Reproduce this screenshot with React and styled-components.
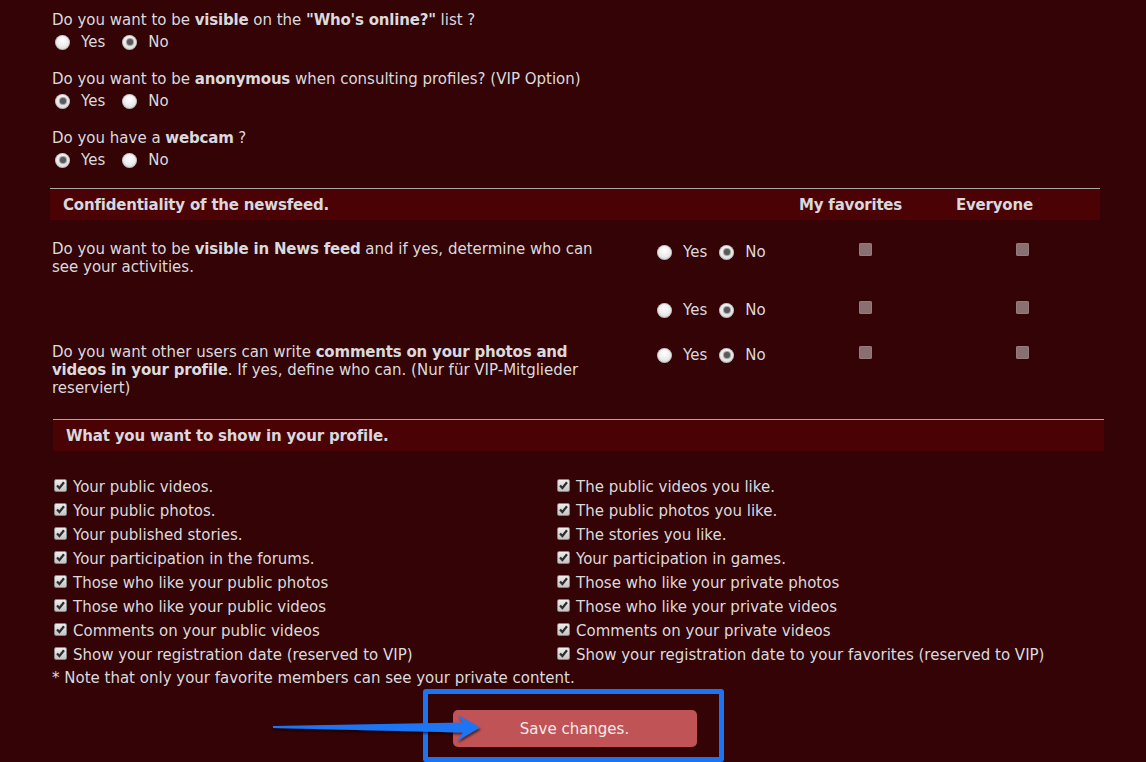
import React from 'react';
import styled, { createGlobalStyle } from 'styled-components';

const GlobalStyle = createGlobalStyle`
  body {
    margin: 0;
    background: #330305;
    color: #dadade;
    font-family: "DejaVu Sans", Verdana, sans-serif;
    font-size: 15px;
    line-height: 18px;
  }
  b {
    letter-spacing: -0.2px;
  }
`;

const Page = styled.div`
  width: 1050px;
  margin-left: 50px;
  padding-top: 11px;
`;

const Question = styled.div`
  padding-left: 2px;
  & + & {
    margin-top: 17px;
  }
`;

const QuestionText = styled.div`
  height: 18px;
`;

const Options = styled.div`
  display: flex;
  align-items: center;
  height: 22px;
  margin-top: ${(p) => p.$top ?? 2}px;
  padding-left: ${(p) => p.$indent ?? 3}px;
`;

const Option = styled.label`
  display: flex;
  align-items: center;
  gap: 11px;
  margin-right: ${(p) => p.$gap}px;
`;

const RadioDot = styled.span`
  width: 15px;
  height: 15px;
  border-radius: 50%;
  flex: none;
  background: radial-gradient(circle at 50% 35%, #ffffff 0%, #ececec 50%, #c6c6c6 100%);
  box-shadow: inset 0 0 0 1px rgba(0, 0, 0, 0.15);
  display: inline-flex;
  align-items: center;
  justify-content: center;

  &::after {
    content: '';
    display: ${(p) => (p.$on ? 'block' : 'none')};
    width: 6px;
    height: 6px;
    border-radius: 50%;
    background: #5a5a5a;
    box-shadow: 0 0 1px 1px #9a9a9a;
  }
`;

const Section = styled.section`
  border-top: 1px solid #a9a9a9;
  margin-top: ${(p) => p.$top}px;
  margin-left: ${(p) => p.$shift || 0}px;
  width: ${(p) => p.$width}px;
`;

const SectionHead = styled.div`
  display: grid;
  grid-template-columns: ${(p) => p.$cols || '1fr'};
  align-items: center;
  height: 31px;
  background: #4a0204;
  font-weight: bold;
  color: #d8d8de;
  letter-spacing: -0.2px;
`;

const HeadCell = styled.div`
  padding-left: ${(p) => p.$pad ?? 12}px;
  grid-column: ${(p) => p.$span || 'auto'};
`;

const FEED_COLS = '600px 137px 157px 156px';

const FeedBody = styled.div`
  padding-top: 20px;
`;

const FeedRow = styled.div`
  display: grid;
  grid-template-columns: ${FEED_COLS};
  align-items: start;
  min-height: 23px;
  padding-bottom: 22px;
`;

const FeedText = styled.div`
  padding: 0 36px 0 2px;
`;

const FeedRadios = styled.div`
  padding-left: 7px;
`;

const BoxCell = styled.div`
  display: flex;
  justify-content: center;
  padding-top: 3px;
`;

const DisabledBox = styled.span`
  width: 13px;
  height: 13px;
  border-radius: 2px;
  background: #8a6f71;
  box-shadow: inset 0 0 0 1px #957b7d;
`;

const ShowList = styled.div`
  display: grid;
  grid-template-columns: 503px 1fr;
  padding: 24px 0 0 1px;
`;

const ShowColumn = styled.div`
  display: flex;
  flex-direction: column;
`;

const ShowItem = styled.label`
  display: flex;
  align-items: center;
  gap: 6px;
  height: 24px;
`;

const CheckBox = styled.span`
  width: 13px;
  height: 13px;
  flex: none;
  box-sizing: border-box;
  border: 1px solid #858585;
  border-radius: 2px;
  background: linear-gradient(#eeeeee, #c4c4c4);
  display: flex;
  align-items: center;
  justify-content: center;
  margin-top: -4px;
`;

const Note = styled.div`
  padding-left: 2px;
  line-height: 22px;
`;

const SaveArea = styled.div`
  position: relative;
  display: flex;
  justify-content: center;
`;

const Frame = styled.div`
  border: 5px solid #1b74f4;
  border-radius: 3px;
  padding: 16px 22px 10px 25px;
  margin-right: 4px;
`;

const SaveButton = styled.button`
  width: 244px;
  height: 37px;
  border: none;
  border-radius: 5px;
  background: #c05356;
  color: #f6eaea;
  font-family: "DejaVu Sans", Verdana, sans-serif;
  font-size: 15px;
`;

const Arrow = styled.svg`
  position: absolute;
  left: 223px;
  top: 22px;
  overflow: visible;
`;

const Radio = ({ on, label, gap = 12 }) => (
  <Option $gap={gap}>
    <RadioDot $on={on} />
    {label}
  </Option>
);

const YesNo = ({ yes, gap, indent, top }) => (
  <Options $indent={indent} $top={top}>
    <Radio on={yes} label="Yes" gap={gap} />
    <Radio on={!yes} label="No" gap={0} />
  </Options>
);

const Tick = () => (
  <svg width="9" height="9" viewBox="0 0 9 9">
    <path d="M1 4.4 L3.4 7 L8 1.2" fill="none" stroke="#2e2e2e" strokeWidth="2.2" />
  </svg>
);

const leftItems = [
  'Your public videos.',
  'Your public photos.',
  'Your published stories.',
  'Your participation in the forums.',
  'Those who like your public photos',
  'Those who like your public videos',
  'Comments on your public videos',
  'Show your registration date (reserved to VIP)',
];

const rightItems = [
  'The public videos you like.',
  'The public photos you like.',
  'The stories you like.',
  'Your participation in games.',
  'Those who like your private photos',
  'Those who like your private videos',
  'Comments on your private videos',
  'Show your registration date to your favorites (reserved to VIP)',
];

const FeedLine = ({ children }) => (
  <FeedRow>
    <FeedText>{children}</FeedText>
    <FeedRadios>
      <YesNo yes={false} gap={12} indent={0} top={1} />
    </FeedRadios>
    <BoxCell>
      <DisabledBox />
    </BoxCell>
    <BoxCell>
      <DisabledBox />
    </BoxCell>
  </FeedRow>
);

export default function App() {
  return (
    <>
      <GlobalStyle />
      <Page>
        <Question>
          <QuestionText>
            Do you want to be <b>visible</b> on the <b>"Who's online?"</b> list ?
          </QuestionText>
          <YesNo yes={false} gap={17} />
        </Question>
        <Question>
          <QuestionText>
            Do you want to be <b>anonymous</b> when consulting profiles? (VIP Option)
          </QuestionText>
          <YesNo yes gap={17} />
        </Question>
        <Question>
          <QuestionText>
            Do you have a <b>webcam</b> ?
          </QuestionText>
          <YesNo yes gap={17} />
        </Question>

        <Section $top={17} $width={1050}>
          <SectionHead $cols={FEED_COLS}>
            <HeadCell $span="1 / 3" $pad={13}>
              Confidentiality of the newsfeed.
            </HeadCell>
            <HeadCell>My favorites</HeadCell>
            <HeadCell>Everyone</HeadCell>
          </SectionHead>
          <FeedBody>
            <FeedLine>
              Do you want to be <b>visible in News feed</b> and if yes, determine who can
              see your activities.
            </FeedLine>
            <FeedLine />
            <FeedLine>
              Do you want other users can write <b>comments on your photos and videos in
              your profile</b>. If yes, define who can. (Nur für VIP-Mitglieder reserviert)
            </FeedLine>
          </FeedBody>
        </Section>

        <Section $top={0} $shift={3} $width={1051}>
          <SectionHead>
            <HeadCell $pad={13}>What you want to show in your profile.</HeadCell>
          </SectionHead>
          <ShowList>
            {[leftItems, rightItems].map((items, i) => (
              <ShowColumn key={i}>
                {items.map((text) => (
                  <ShowItem key={text}>
                    <CheckBox>
                      <Tick />
                    </CheckBox>
                    {text}
                  </ShowItem>
                ))}
              </ShowColumn>
            ))}
          </ShowList>
        </Section>

        <Note>* Note that only your favorite members can see your private content.</Note>

        <SaveArea>
          <Frame>
            <SaveButton type="button">Save changes.</SaveButton>
          </Frame>
          <Arrow width="210" height="36" viewBox="0 0 210 36">
            <defs>
              <filter id="arrowShadow" x="-10%" y="-50%" width="120%" height="200%">
                <feDropShadow dx="1" dy="2" stdDeviation="1.2" floodColor="#000" floodOpacity="0.6" />
              </filter>
            </defs>
            <polygon
              points="0,15 190,11.5 185,4 207,16.5 184,30 190,21.5 0,17"
              fill="#1e74f5"
              filter="url(#arrowShadow)"
            />
          </Arrow>
        </SaveArea>
      </Page>
    </>
  );
}
